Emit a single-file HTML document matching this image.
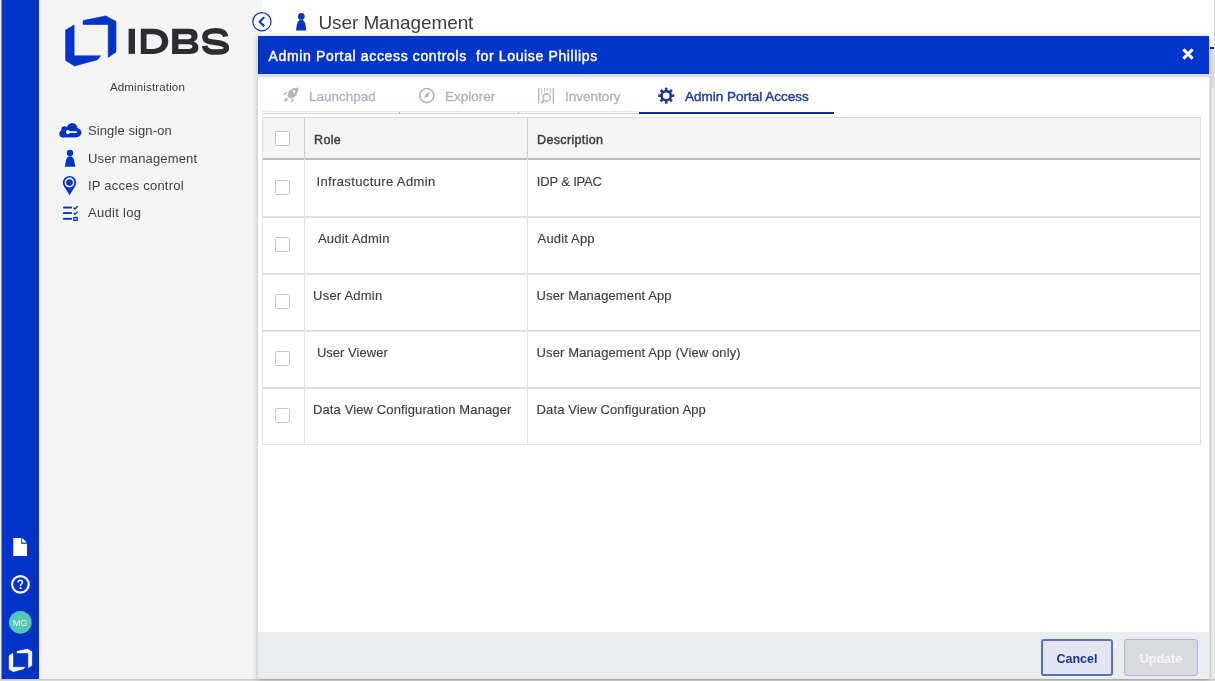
<!DOCTYPE html>
<html><head><meta charset="utf-8">
<style>
*{margin:0;padding:0;box-sizing:border-box}
html,body{width:1215px;height:681px;overflow:hidden;background:#fff;will-change:transform;font-family:"Liberation Sans",sans-serif;color:#373b40}
.abs{position:absolute}
#edge{left:0;top:0;width:2px;height:679px;background:linear-gradient(90deg,#efebdf 0,#efebdf 1px,#788fd2 1px)}
#rail{left:2px;top:0;width:37px;height:679px;background:#0033c6}
#railsep{left:39px;top:0;width:1px;height:679px;background:#f8f8f8}
#side{left:40px;top:0;width:222px;height:679px;background:#f4f4f4}
#bottom{left:0;top:679px;width:1215px;height:2px;background:linear-gradient(#cacaca 0,#cacaca 1px,#d9d9d9 1px)}
.nav{left:88px;font-size:13px;color:#3a3e43;white-space:nowrap}
#modal{left:258px;top:36px;width:951px;height:643px;background:#fff;box-shadow:0 1px 6px rgba(0,0,0,.25)}
#mhead{left:0;top:0;width:951px;height:38px;background:#0035c9;color:#fff;font-size:14px;-webkit-text-stroke:0.45px #fff;letter-spacing:0.64px}
#mband{left:0;top:38px;width:951px;height:4px;background:linear-gradient(#d3daf3 0,#d3daf3 1px,#dce2f6 1px,#dde3f6 3px,#e9edf9 3px)}
.tab{font-size:13.5px;color:#b2b5b9;white-space:nowrap;-webkit-text-stroke:0.4px}
#footer{left:0;top:596px;width:951px;height:47px;background:#ebecee}
.cell{position:absolute;font-size:13px;color:#3c4045;white-space:nowrap;-webkit-text-stroke:0.15px #3c4045}
.cb{position:absolute;width:15px;height:15px;border:1px solid #c3c5c8;border-radius:1.5px;background:#fff}
</style></head><body>
<div id="edge" class="abs"></div>
<div id="rail" class="abs"></div>
<div id="railsep" class="abs"></div>
<div id="side" class="abs"></div>
<div id="bottom" class="abs"></div>

<!-- logo -->
<svg class="abs" style="left:0;top:0" width="262" height="681" viewBox="0 0 262 681">
 <defs>
  <g id="lg">
   <path d="M17.5,4.7 L40.2,0 L50.4,5.5 L50.4,36 L42.6,41.5 L42.6,8.6 L17.5,8.6 Z"/>
   <path d="M8.5,9.1 L0,14.1 L0,44.6 L9,50.1 L31.9,43.8 L35,39.9 L8.5,39.9 Z"/>
  </g>
 </defs>
 <use href="#lg" fill="#0033c6" transform="translate(65.6,15.9)" stroke="#0033c6" stroke-width="0.6" stroke-linejoin="round"/>
 <g fill="#2b2d31" fill-rule="evenodd">
  <rect x="128.6" y="28.8" width="6.4" height="25.1"/>
  <path d="M140.8,28.8 H153.5 C162.5,28.8 168.3,34 168.3,41.35 C168.3,48.7 162.5,53.9 153.5,53.9 H140.8 Z M146.5,34.2 V49 H153 C158.8,49 161.9,46 161.9,41.6 C161.9,37.2 158.8,34.2 153,34.2 Z"/>
  <path d="M172.1,28.8 H189.5 C195,28.8 197.6,31.8 197.6,35.7 C197.6,38.6 196,40.6 193.6,41.4 C196.6,42.2 198.4,44.6 198.4,47.8 C198.4,51.8 195.6,53.9 189.8,53.9 H172.1 Z M178.4,34.2 H188.4 C190.4,34.2 191.5,35.1 191.5,36.7 C191.5,38.3 190.4,39.2 188.4,39.2 H178.4 Z M178.4,44.2 H188.8 C191.2,44.2 192.5,45.2 192.5,46.6 C192.5,48 191.2,49 188.8,49 H178.4 Z"/>
 </g>
 <path d="M225.8,36.4 C225,32.2 221,30.7 215.6,30.7 C209.5,30.7 204.9,32.8 204.9,36.9 C204.9,41.2 209.5,41.8 215.6,42.5 C222.5,43.3 226.3,44.4 226.3,47.9 C226.3,51.2 221.8,52.1 215.6,52.1 C209.3,52.1 205.3,50.6 204.7,45.8" fill="none" stroke="#2b2d31" stroke-width="5.5"/>
 <!-- nav icons -->
 <g fill="#0033c6">
  <circle cx="72.2" cy="128.2" r="5.3"/>
  <circle cx="64.6" cy="129.6" r="3.3"/>
  <circle cx="77" cy="132.6" r="4.4"/>
  <circle cx="62.9" cy="133.8" r="3.6"/>
  <rect x="62.9" y="130" width="14" height="7.4"/>
 </g>
 <g fill="#f4f4f4">
  <circle cx="68" cy="132.1" r="2.1"/>
  <rect x="69.5" y="131.2" width="7.3" height="1.8"/>
 </g>
 <g fill="#0033c6">
  <circle cx="70" cy="152.9" r="3.2"/>
  <path d="M70,156.2 C72.3,156.2 73.6,158.2 74.3,161 L75.3,166.8 H64.9 L65.8,161 C66.5,158.2 67.8,156.2 70,156.2 Z"/>
  <path fill-rule="evenodd" d="M62.9,182.5 A6.6,6.6 0 0 1 76.1,182.5 C76.1,184.5 75.4,185.6 74.6,187 L69.5,195.2 L64.4,187 C63.6,185.6 62.9,184.5 62.9,182.5 Z M64.6,182.5 A4.9,4.9 0 1 0 74.4,182.5 A4.9,4.9 0 1 0 64.6,182.5 Z"/>
  <circle cx="69.5" cy="182.5" r="3.3"/>
  <rect x="63.1" y="206.6" width="8.8" height="1.9"/>
  <rect x="63.1" y="212.1" width="8.8" height="1.9"/>
  <rect x="63.1" y="217.85" width="8.8" height="1.9"/>
 </g>
 <g fill="none" stroke="#0033c6" stroke-width="1.3">
  <path d="M73.6,207.6 L75,209 L77.7,206.2"/>
  <path d="M73.6,213 L75,214.4 L77.7,211.6"/>
  <rect x="73.8" y="217.5" width="3.4" height="2.8"/>
 </g>
 <!-- rail icons -->
 <g fill="#fff">
  <path d="M13.3,538 H21.2 V543.7 H27 V555.9 H13.3 Z"/>
  <path d="M22.1,538 L26.9,542.6 H22.1 Z"/>
 </g>
 <circle cx="20.4" cy="584.4" r="8.3" fill="none" stroke="#fff" stroke-width="2.2"/>
 <path d="M18,582.4 C18,580.9 19.1,580.2 20.3,580.2 C21.6,580.2 22.5,581 22.5,582.2 C22.5,583.6 20.7,584 20.5,585.5 L20.5,586.2" fill="none" stroke="#fff" stroke-width="1.4"/>
 <rect x="19.6" y="587.3" width="1.9" height="1.6" fill="#fff"/>
 <circle cx="20.3" cy="622.3" r="11.4" fill="#52c7b4"/>
 <text x="20.3" y="625.9" text-anchor="middle" font-family="Liberation Sans" font-size="9.3" fill="#eefaf7">MG</text>
 <use href="#lg" fill="#fff" transform="translate(9.1,649.1) scale(0.452)" stroke="#fff" stroke-width="1" stroke-linejoin="round"/>
</svg>
<div class="abs" style="left:110px;top:80px;font-size:11.5px;color:#3a3e43;line-height:14px;letter-spacing:0.15px">Administration</div>

<div class="abs nav" style="top:123px;line-height:16px;letter-spacing:0.1px">Single sign-on</div>
<div class="abs nav" style="top:151px;line-height:16px;letter-spacing:0.15px">User management</div>
<div class="abs nav" style="top:178px;line-height:16px;letter-spacing:0.22px">IP acces control</div>
<div class="abs nav" style="top:205px;line-height:16px;letter-spacing:0.3px">Audit log</div>

<!-- page header -->
<svg class="abs" style="left:240px;top:0" width="80" height="40" viewBox="240 0 80 40">
 <circle cx="261.9" cy="21.7" r="9.1" fill="#fff" stroke="#0033c6" stroke-width="1.2"/>
 <path d="M264.3,17.1 L259.6,21.7 L264.3,26.3" fill="none" stroke="#0033c6" stroke-width="2"/>
 <g fill="#0033c6">
  <circle cx="301.3" cy="16.4" r="3.35"/>
  <path d="M301.2,19.7 C303.6,19.7 304.9,21.8 305.5,24.6 L306.3,30.4 H296 L296.9,24.6 C297.5,21.8 298.8,19.7 301.2,19.7 Z"/>
 </g>
</svg>
<div class="abs" style="left:318.5px;top:12px;font-size:19px;color:#3a3e43;line-height:22px;letter-spacing:-0.1px">User Management</div>

<div class="abs" style="left:1210px;top:88px;width:4px;height:591px;background:linear-gradient(90deg,#e2e2e2 0,#e2e2e2 1px,#efefef 1px,#efefef 2px,#f5f5f5 3px,#f2f2f2 4px)"></div>
<div class="abs" style="left:1210px;top:47px;width:5px;height:2px;background:#0033c6"></div>
<div class="abs" style="left:1210px;top:49px;width:4px;height:39px;background:#e0e3f0"></div>
<div class="abs" style="left:1214px;top:0;width:1px;height:679px;background:#dcdcdc"></div>
<div class="abs" style="left:256px;top:36px;width:1px;height:643px;background:rgba(0,0,0,.025)"></div>
<!-- modal -->
<div id="modal" class="abs">
 <div id="mhead" class="abs"><div class="abs" style="left:10.5px;top:12px;line-height:17px;white-space:nowrap">Admin Portal access controls&nbsp; for Louise Phillips</div></div>
 <div id="mband" class="abs"></div>
 <div class="abs tab" style="left:51px;top:53px">Launchpad</div>
 <div class="abs tab" style="left:187px;top:53px">Explorer</div>
 <div class="abs tab" style="left:307px;top:53px">Inventory</div>
 <div class="abs tab" style="left:427px;top:53px;color:#1c3a9e">Admin Portal Access</div>

 <!-- tab underline -->
 <div class="abs" style="left:4px;top:75px;width:377px;height:1px;background:#e2e8f8"></div>
 <div class="abs" style="left:4px;top:77px;width:377px;height:1px;background:#cad4f2"></div>
 <div class="abs" style="left:141px;top:76px;width:1px;height:2px;background:#a9b6ea"></div>
 <div class="abs" style="left:260px;top:76px;width:1px;height:2px;background:#a9b6ea"></div>
 <div class="abs" style="left:381px;top:76px;width:195px;height:2px;background:#0f2c9c"></div>
 <!-- table -->
 <div class="abs" style="left:4px;top:81px;width:939px;height:328px;border:1px solid #e0e1e4;border-top-color:#d8d9db"></div>
 <div class="abs" style="left:5px;top:82px;width:937px;height:40px;background:#f4f4f4"></div>
 <div class="abs" style="left:5px;top:122px;width:937px;height:2px;background:#bdbec1"></div>
 <div class="abs" style="left:46px;top:82px;width:1px;height:326px;background:#e2e3e5"></div>
 <div class="abs" style="left:269px;top:82px;width:1px;height:326px;background:#e2e3e5"></div>
 <div class="abs" style="left:46px;top:82px;width:1px;height:40px;background:#cfcfcf"></div>
 <div class="abs" style="left:269px;top:82px;width:1px;height:40px;background:#cfcfcf"></div>
 <div class="abs" style="left:5px;top:180px;width:937px;height:2px;background:#dfe0e2"></div>
 <div class="abs" style="left:5px;top:237px;width:937px;height:2px;background:#dfe0e2"></div>
 <div class="abs" style="left:5px;top:294px;width:937px;height:2px;background:#dfe0e2"></div>
 <div class="abs" style="left:5px;top:351px;width:937px;height:2px;background:#dfe0e2"></div>
 <div class="cb" style="left:17px;top:95px"></div>
 <div class="cb" style="left:17px;top:144px"></div>
 <div class="cb" style="left:17px;top:201px"></div>
 <div class="cb" style="left:17px;top:258px"></div>
 <div class="cb" style="left:17px;top:315px"></div>
 <div class="cb" style="left:17px;top:372px"></div>
 <div class="cell" style="left:56px;top:97.3px;font-size:12.5px;letter-spacing:0.35px;-webkit-text-stroke:0.45px #3a3e43">Role</div>
 <div class="cell" style="left:279px;top:97.3px;font-size:12.5px;letter-spacing:0.35px;-webkit-text-stroke:0.45px #3a3e43">Description</div>
 <div class="cell" id="c0" style="left:58.50px;top:138px;letter-spacing:0.372px">Infrastucture Admin</div>
 <div class="cell" id="c1" style="left:278.80px;top:138px;letter-spacing:-0.167px">IDP &amp; IPAC</div>
 <div class="cell" id="c2" style="left:59.90px;top:195px;letter-spacing:0.210px">Audit Admin</div>
 <div class="cell" id="c3" style="left:279.60px;top:195px;letter-spacing:0.161px">Audit App</div>
 <div class="cell" id="c4" style="left:55.10px;top:252px;letter-spacing:0.211px">User Admin</div>
 <div class="cell" id="c5" style="left:278.60px;top:252px;letter-spacing:0.111px">User Management App</div>
 <div class="cell" id="c6" style="left:58.90px;top:309px;letter-spacing:0.030px">User Viewer</div>
 <div class="cell" id="c7" style="left:278.60px;top:309px;letter-spacing:0.113px">User Management App (View only)</div>
 <div class="cell" id="c8" style="left:55.00px;top:366px;letter-spacing:0.117px">Data View Configuration Manager</div>
 <div class="cell" id="c9" style="left:278.60px;top:366px;letter-spacing:0.123px">Data View Configuration App</div>
 <div id="footer" class="abs">
  <div class="abs" style="left:783px;top:7px;width:72px;height:37px;border:2px solid #5b71bf;border-radius:3px;background:#e3e6f0;color:#1a3398;font-weight:bold;font-size:12.5px;text-align:center;line-height:36.5px">Cancel</div>
  <div class="abs" style="left:866px;top:7px;width:74px;height:37px;border:1px solid #aab5de;border-radius:3px;background:#d9dadc;color:#f6f6f6;font-weight:bold;font-size:12.5px;text-align:center;line-height:38.5px">Update</div>
 </div>
</div>
<svg class="abs" style="left:0;top:0" width="1215" height="681" viewBox="0 0 1215 681">
 <!-- close -->
 <path d="M1183.4,49.4 L1192.6,58.6 M1192.6,49.4 L1183.4,58.6" stroke="#fff" stroke-width="2.9" fill="none"/>
 <!-- rocket -->
 <g fill="#b3b6bb">
  <path d="M298.2,87.8 C298.6,91.4 297.2,94.6 294.4,97.2 L289.8,98.6 L287.3,96.1 L288.7,91.5 C291.2,88.9 294.6,87.4 298.2,87.8 Z"/>
  <path d="M282.9,94.6 L285.2,92.4 L287.8,92 L286.2,94.5 Z"/>
  <path d="M291,102.8 L293.3,100.5 L293.7,97.9 L291.2,99.5 Z"/>
  <path d="M283.9,101.8 L284.7,98.9 L286.6,97.7 L288,99.1 L286.8,101 Z"/>
 </g>
 <circle cx="294.2" cy="91.6" r="1.35" fill="#fff"/>
 <!-- compass -->
 <circle cx="426.8" cy="95.55" r="7.05" fill="none" stroke="#b3b6bb" stroke-width="1.6"/>
 <path d="M424.2,98.1 L425.6,94 L429.8,92.2 L428.3,96.4 Z" fill="#b3b6bb"/>
 <!-- inventory -->
 <g fill="#b3b6bb">
  <rect x="538" y="87.9" width="1.3" height="15.8"/>
  <rect x="552.7" y="87.9" width="1.4" height="15.8"/>
  <rect x="541" y="87.9" width="0.8" height="6.7"/>
  <rect x="544.1" y="87.9" width="0.8" height="4.6"/>
  <rect x="546.6" y="87.9" width="1" height="3.7"/>
  <rect x="549.9" y="87.9" width="0.9" height="5.6"/>
 </g>
 <circle cx="546.6" cy="97.4" r="3.6" fill="none" stroke="#b3b6bb" stroke-width="1.4"/>
 <path d="M544,100.1 L541,103.2" stroke="#b3b6bb" stroke-width="1.7" fill="none"/>
 <!-- gear -->
 <g fill="#1b3799" transform="translate(666.2,95.7)">
  <circle r="5.9"/>
  <rect x="-1.3" y="-8" width="2.6" height="16"/>
  <rect x="-1.3" y="-8" width="2.6" height="16" transform="rotate(45)"/>
  <rect x="-1.3" y="-8" width="2.6" height="16" transform="rotate(90)"/>
  <rect x="-1.3" y="-8" width="2.6" height="16" transform="rotate(135)"/>
  <circle r="3.3" fill="#fff"/>
 </g>
</svg>
</body></html>
